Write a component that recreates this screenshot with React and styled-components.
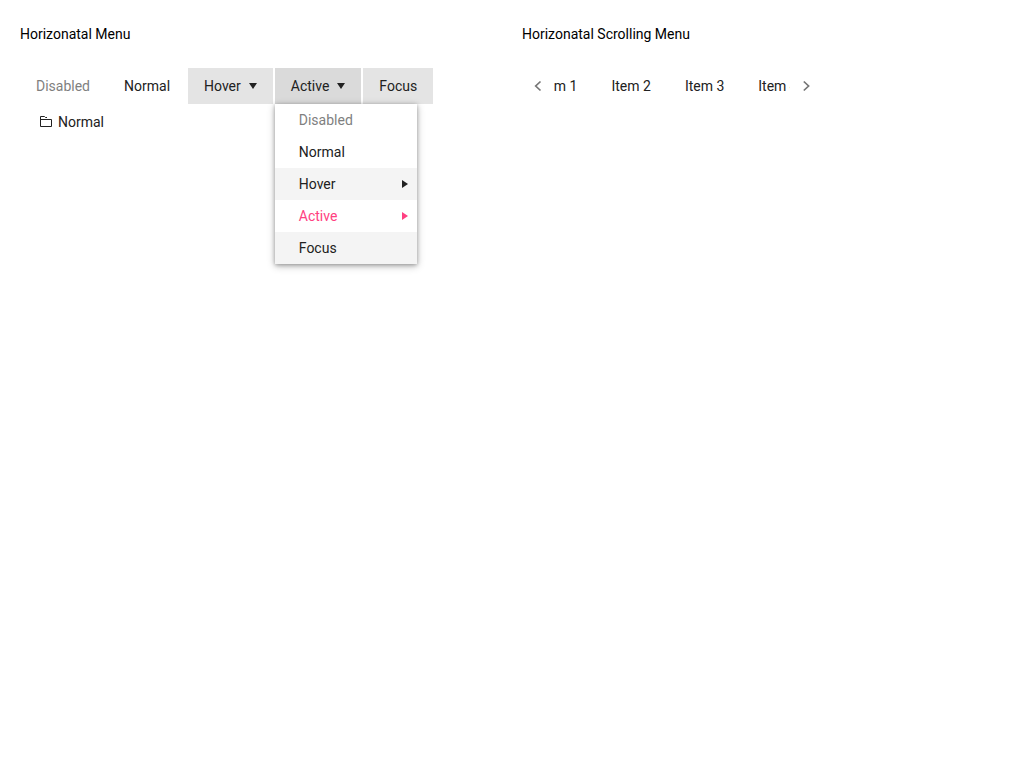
import React, { useLayoutEffect, useRef } from "react";
import styled, { createGlobalStyle, css } from "styled-components";

const GlobalStyle = createGlobalStyle`
  *, *::before, *::after { box-sizing: border-box; }
  body {
    margin: 0;
    background: #fff;
    color: #000;
    font: 14px/20px Roboto, "Liberation Sans", sans-serif;
  }
`;

const Page = styled.main`
  display: grid;
  grid-template-columns: 1fr 1fr;
  min-height: 100vh;
  padding: 0 10px;
`;

const Column = styled.section`
  min-width: 0;
  padding: 24px 10px;
`;

const Title = styled.h2`
  margin: 0 0 24px;
  font-size: 14px;
  line-height: 20px;
  font-weight: 400;
`;

const MenuBar = styled.ul`
  display: flex;
  flex-wrap: wrap;
  column-gap: 2px;
  margin: 0;
  padding: 0;
  list-style: none;
`;

const BarEntry = styled.li`
  position: relative;
  flex: none;
`;

const resetButton = css`
  display: flex;
  align-items: center;
  margin: 0;
  border: 0;
  font: inherit;
  white-space: nowrap;
`;

const barShades = { hover: "#e4e4e4", active: "#dadada", focus: "#e4e4e4" };

const BarButton = styled.button`
  ${resetButton}
  height: 36px;
  padding: 0 16px;
  color: #212121;
  background: ${({ $state }) => barShades[$state] || "transparent"};
  &:disabled { color: #7f7f7f; }
`;

const DownArrow = styled.svg`
  width: 8px;
  height: 6px;
  margin-left: 8px;
  fill: currentColor;
`;

const FolderIcon = styled.svg`
  width: 18px;
  height: 18px;
  margin-right: 4px;
  fill: none;
  stroke: currentColor;
`;

const Popup = styled.ul`
  position: absolute;
  top: 100%;
  left: 0;
  z-index: 1;
  width: 142px;
  margin: 0;
  padding: 0;
  list-style: none;
  background: #fff;
  box-shadow: 0 1px 4px rgba(0, 0, 0, 0.3), 0 2px 8px rgba(0, 0, 0, 0.24);
`;

const popupShades = { hover: "#f4f4f4", focus: "#f4f4f4" };

const PopupButton = styled.button`
  ${resetButton}
  justify-content: space-between;
  width: 100%;
  height: 32px;
  padding: 0 9px 0 24px;
  color: ${({ $state }) => ($state === "active" ? "#ff4081" : "#212121")};
  background: ${({ $state }) => popupShades[$state] || "transparent"};
  &:disabled { color: #7f7f7f; }
`;

const RightArrow = styled.svg`
  width: 6px;
  height: 8px;
  fill: currentColor;
`;

const Scroller = styled.div`
  display: flex;
  max-width: 300px;
`;

const ScrollButton = styled.button`
  ${resetButton}
  flex: none;
  justify-content: center;
  width: 32px;
  height: 36px;
  padding: 0;
  color: #757575;
  background: transparent;
`;

const Chevron = styled.svg`
  width: 8px;
  height: 12px;
  fill: none;
  stroke: currentColor;
  stroke-width: 1.7;
`;

const Viewport = styled.div`
  flex: 1;
  min-width: 0;
  overflow: hidden;
`;

const Track = styled(MenuBar)`
  flex-wrap: nowrap;
  width: max-content;
`;

const popupItems = [
  { text: "Disabled", disabled: true },
  { text: "Normal" },
  { text: "Hover", state: "hover", nested: true },
  { text: "Active", state: "active", nested: true },
  { text: "Focus", state: "focus" },
];

const barItems = [
  { text: "Disabled", disabled: true },
  { text: "Normal" },
  { text: "Hover", state: "hover", arrow: true },
  { text: "Active", state: "active", arrow: true, items: popupItems },
  { text: "Focus", state: "focus" },
  { text: "Normal", folder: true },
];

const scrollItems = ["Item 1", "Item 2", "Item 3", "Item 4"];

function BarItem({ text, state, disabled, arrow, folder, items }) {
  return (
    <BarEntry>
      <BarButton type="button" $state={state} disabled={disabled} aria-expanded={arrow ? Boolean(items) : undefined}>
        {folder && (
          <FolderIcon viewBox="0 0 18 18" aria-hidden="true">
            <path d="M5 6.5H15.5V13.5H4.5V3.5H8.5L9.5 4.5H11" />
          </FolderIcon>
        )}
        {text}
        {arrow && (
          <DownArrow viewBox="0 0 8 6" aria-hidden="true">
            <path d="M0 0H8L4 6Z" />
          </DownArrow>
        )}
      </BarButton>
      {items && (
        <Popup>
          {items.map((item) => (
            <li key={item.text}>
              <PopupButton type="button" $state={item.state} disabled={item.disabled}>
                {item.text}
                {item.nested && (
                  <RightArrow viewBox="0 0 6 8" aria-hidden="true">
                    <path d="M0 0L6 4L0 8Z" />
                  </RightArrow>
                )}
              </PopupButton>
            </li>
          ))}
        </Popup>
      )}
    </BarEntry>
  );
}

function ScrollingMenu() {
  const view = useRef(null);
  useLayoutEffect(() => {
    view.current.scrollLeft = 32;
  }, []);
  const scroll = (distance) => () => view.current.scrollBy({ left: distance });
  return (
    <Scroller>
      <ScrollButton type="button" aria-label="Scroll left" onClick={scroll(-32)}>
        <Chevron viewBox="0 0 8 12" aria-hidden="true">
          <path d="M6.5 1.5L1.7 6L6.5 10.5" />
        </Chevron>
      </ScrollButton>
      <Viewport ref={view}>
        <Track>
          {scrollItems.map((text) => (
            <BarEntry key={text}>
              <BarButton type="button">{text}</BarButton>
            </BarEntry>
          ))}
        </Track>
      </Viewport>
      <ScrollButton type="button" aria-label="Scroll right" onClick={scroll(32)}>
        <Chevron viewBox="0 0 8 12" aria-hidden="true">
          <path d="M1.8 1.5L6.6 6L1.8 10.5" />
        </Chevron>
      </ScrollButton>
    </Scroller>
  );
}

export default function App() {
  return (
    <>
      <GlobalStyle />
      <Page>
        <Column>
          <Title>Horizonatal Menu</Title>
          <MenuBar>
            {barItems.map((item, index) => (
              <BarItem key={index} {...item} />
            ))}
          </MenuBar>
        </Column>
        <Column>
          <Title>Horizonatal Scrolling Menu</Title>
          <ScrollingMenu />
        </Column>
      </Page>
    </>
  );
}
